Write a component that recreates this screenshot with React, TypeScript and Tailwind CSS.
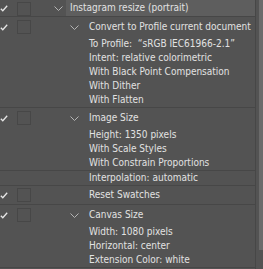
import React from "react";

type Row = { title: string; lines?: string[]; split?: number; h?: string };

function Check() {
  return (
    <svg width="8" height="7" viewBox="0 0 8 7" className="block">
      <path d="M0.8 3.8 L2.8 5.8 L7.2 0.8" fill="none" stroke="#e6e6e6" strokeWidth="1.3" />
    </svg>
  );
}

function Chevron() {
  return (
    <svg width="9" height="5" viewBox="0 0 9 5" className="block">
      <path d="M0.5 0.5 L4.5 4.5 L8.5 0.5" fill="none" stroke="#b4b4b4" strokeWidth="1" />
    </svg>
  );
}

function Box() {
  return <div className="w-[14px] h-[14px] border border-[#474747]" />;
}

// left gutter: check column + dialog toggle column
function Gutter({ h }: { h: string }) {
  return (
    <div className={`flex ${h} items-center shrink-0`}>
      <div className="w-[12px] flex justify-start"><Check /></div>
      <div className="w-[24px] flex justify-center"><Box /></div>
    </div>
  );
}

const ROWS: Row[] = [
  {
    title: "Convert to Profile current document",
    lines: ["To Profile:  \u201csRGB IEC61966-2.1\u201d", "Intent: relative colorimetric", "With Black Point Compensation", "With Dither", "With Flatten"],
  },
  { title: "Image Size", lines: ["Height: 1350 pixels", "With Scale Styles", "With Constrain Proportions"], split: 3 },
  { title: "Reset Swatches", h: "h-[18px]" },
  { title: "Canvas Size", lines: ["Width: 1080 pixels", "Horizontal: center", "Extension Color: white"] },
];

export default function App() {
  return (
    <div
      className="w-[263px] h-[269px] bg-[#535353] text-[#e2e2e2] text-[10px] overflow-hidden flex"
      style={{ fontFamily: '"DejaVu Sans Condensed", "Liberation Sans", sans-serif' }}
    >
      <div className="w-[255px] shrink-0 flex flex-col">
        {/* action header */}
        <div className="flex h-[17px] border-b border-[#474747]">
          <Gutter h="h-[17px]" />
          <div className="w-[30px] flex justify-end items-center pr-[3px] pt-[1px]"><Chevron /></div>
          <div className="flex-1 bg-[#5e5e5e] pl-[4px] flex items-center leading-none whitespace-nowrap">Instagram resize (portrait)</div>
        </div>

        {ROWS.map((r) => (
          <React.Fragment key={r.title}>
            <div className="flex border-b border-[#474747]">
              <div className="flex flex-col shrink-0">
                <Gutter h={r.h ?? "h-[20px]"} />
              </div>
              <div className="w-[34px]" />
              <div className={`w-[19px] flex items-center justify-start ${r.h ?? "h-[20px]"}`}>
                {r.lines && <Chevron />}
              </div>
              <div className="flex-1 flex flex-col whitespace-nowrap">
                <div className={`${r.h ?? "h-[20px]"} flex items-center leading-none`}>{r.title}</div>
                {(r.lines ?? []).map((l) => (
                  <div key={l} className="h-[14px] flex items-center leading-none whitespace-pre">{l}</div>
                ))}
              </div>
            </div>
            {r.split && (
              <div className="flex h-[15px] border-b border-[#474747]">
                <div className="w-[89px]" />
                <div className="flex items-center leading-none">Interpolation: automatic</div>
              </div>
            )}
          </React.Fragment>
        ))}
      </div>

      {/* scrollbar */}
      <div className="flex-1 flex border-l border-[#474747]">
        <div className="w-[3px]" />
        <div className="flex-1 flex flex-col">
          <div className="h-[250px] bg-[#6b6b6b]" />
        </div>
      </div>
    </div>
  );
}
